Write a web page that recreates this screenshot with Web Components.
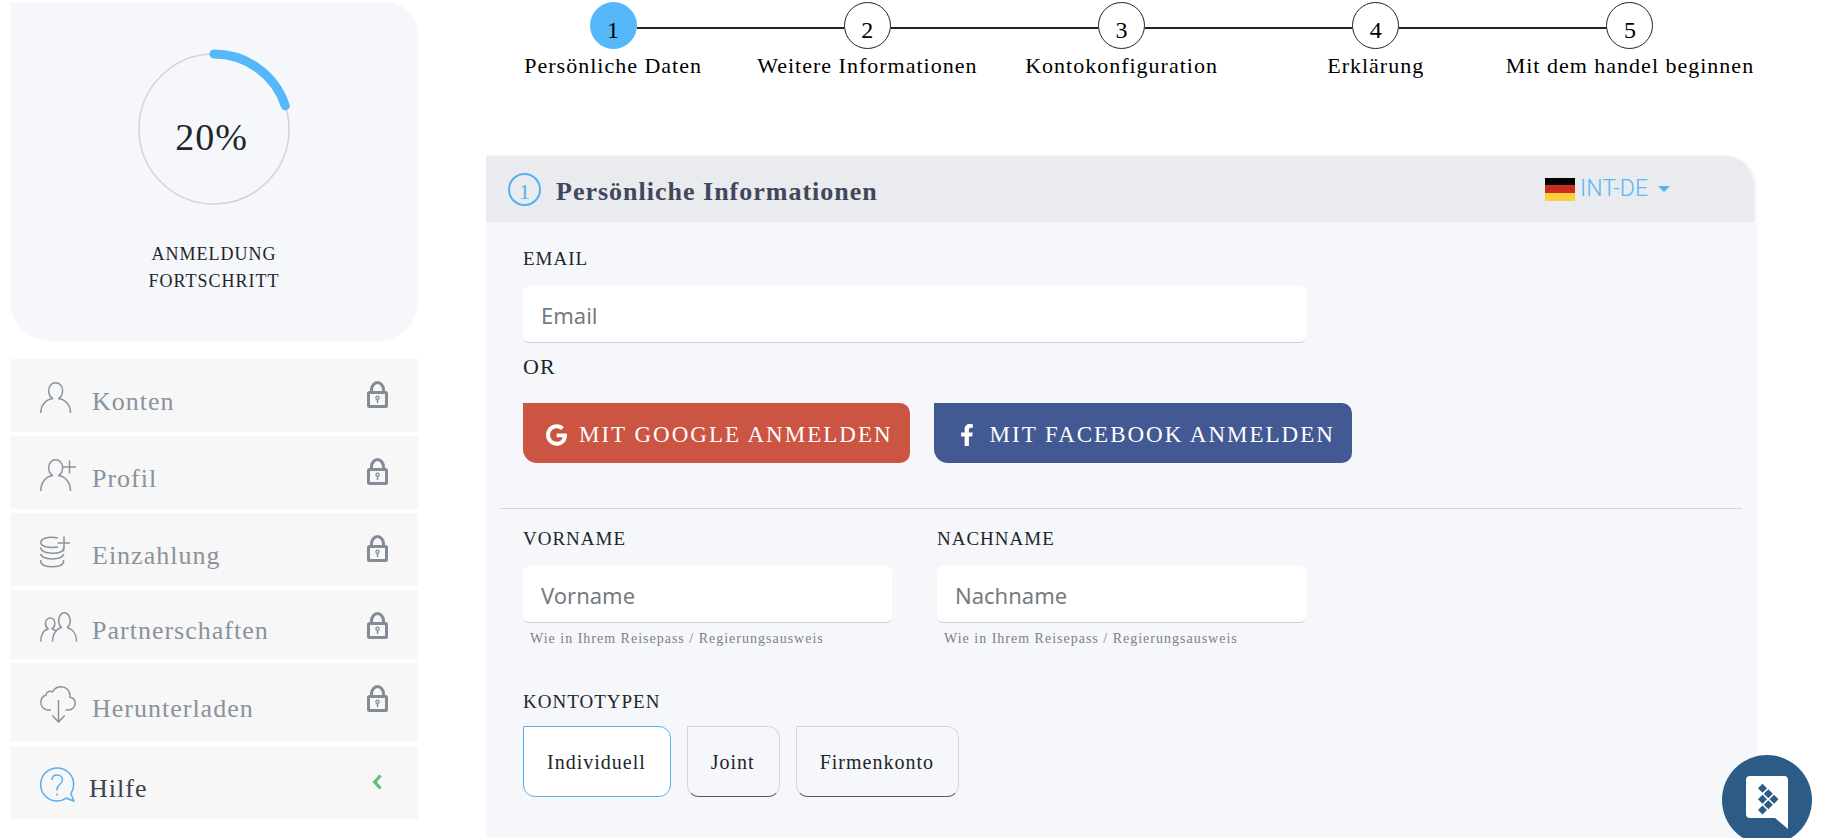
<!DOCTYPE html>
<html lang="de">
<head>
<meta charset="utf-8">
<meta name="viewport" content="width=device-width, initial-scale=1">
<title>Persönliche Informationen</title>
<style>
  body {
    margin: 0;
    background: #fff;
    color: #212529;
    font-family: "Liberation Serif", "Times New Roman", serif;
    letter-spacing: 1px;
    --accent: #54b8fa;
    --panel: #f5f7fb;
    --muted: #8a929c;
    --ink: #212529;
  }
</style>
</head>
<body>
<signup-page></signup-page>

<script>
  const define = (name, html, setup) => {
    const tpl = document.createElement('template');
    tpl.innerHTML = '<style>*,*::before,*::after{box-sizing:border-box}:host{display:block}</style>' + html;
    customElements.define(name, class extends HTMLElement {
      connectedCallback() {
        if (this.shadowRoot) return;
        this.attachShadow({ mode: 'open' }).append(tpl.content.cloneNode(true));
        if (setup) setup(this, this.shadowRoot);
      }
    });
  };

  const svg = (w, h, body) =>
    `<svg width="${w}" height="${h}" viewBox="0 0 ${w} ${h}" fill="none" aria-hidden="true">${body}</svg>`;

  const icons = {
    user: svg(32, 32, '<g stroke="#8a929c" stroke-width="1.5"><path d="M12.6 16.6C9.8 14.8 8.7 12 8.7 8.600C8.700 4 11.700.8 15.600.8C19.500.8 22.600 4 22.600 8.600C22.600 12 21.500 14.800 18.700 16.600"/><path d="M.8 31C.8 23 6 17.300 13.200 16.600M18 16.600C25.200 17.300 30.500 23 30.500 31"/></g>'),
    userPlus: svg(36, 32, '<g stroke="#8a929c" stroke-width="1.5"><path d="M12.600 16.600C9.800 14.800 8.700 12 8.700 8.600C8.700 4 11.700.8 15.600.8C19.500.8 22.600 4 22.600 8.600C22.600 12 21.500 14.800 18.700 16.600"/><path d="M.8 32C.8 23 6 17.300 13.200 16.600M18 16.600C25.200 17.300 30.500 23 30.500 32M29.500 1.500v13M23 8h13"/></g>'),
    coins: svg(32, 32, '<g stroke="#8a929c" stroke-width="1.5"><path d="M18 1.900C8 .2.8 2.200.8 6.500C.8 10.300 8 12.300 18 11.100M24 .5v13M17.500 7H30M.8 12.300C2.500 18.800 22 18.800 23.500 13M.8 18C2.500 24.500 22 24.500 23.500 18.200M.8 24V26C2.500 32.400 22 32.400 23.500 26V24M23.500 11.500V15.500M.8 11.500V13M.8 18V19.500M23.500 18V19.500"/></g>'),
    partners: svg(38, 30, '<g stroke="#8a929c" stroke-width="1.500"><path d="M8.500 16.800C6.500 15.800 5.500 13.700 5.500 11.400C5.500 8.300 7.500 6 10.200 6C12.900 6 14.800 8.300 14.800 11.400C14.800 13.700 14 15.800 12 16.800L16.500 19"/><path d="M.8 29.500C.8 23 3.500 18 8.500 16.800M21.800 15.500C19.600 13.900 18.700 11.200 18.700 8.400C18.700 4 21.200.8 24.400.8C27.600.8 30.200 4 30.200 8.400C30.200 11.200 29.300 13.900 27 15.500"/><path d="M12.500 29.500C12.500 22.500 16 16.500 21.800 15.500M27 15.500C33 17 36.500 22.500 36.500 29.500"/></g>'),
    download: svg(36, 37, '<g stroke="#8a929c" stroke-width="1.500"><path d="M11 24H8C3.700 23.500.8 20.300.8 16.300C.8 12.500 3 10 6 9.200C6.300 6 9 4.500 12.500 5.800C14.500 2.500 17.500.8 21 .8C26.200.8 29.800 4.600 30 9.500C29.900 10.500 29.900 10.800 30 11.300C33.300 11.800 35.200 14.300 35.200 17.300C35.200 21 32.200 24 28.500 24H25.500M18.500 14V36M12.300 29.500L18.500 36L24.700 29.500"/></g>'),
    help: svg(35, 35, '<g stroke="#54b0ee" stroke-width="1.500"><path d="M31 26.500C32.700 23.900 33.700 20.800 33.700 17.500A16.500 16.500 0 1 0 17.200 34C20.500 34 23.600 33 26.200 31.200L33.700 34Z"/><path d="M12 13C12 9.800 14 8 17 8C20.300 8 22.500 10 22.500 12.800C22.500 17.500 17 17 17 22.500V23.500M17 26.500v2"/></g>'),
    lock: svg(21, 27, '<path d="M4.500 12V9A6 7.500 0 0 1 16.500 9V12" stroke="#838b97" stroke-width="3"/><rect x="1.500" y="11.500" width="18" height="14" rx="1" fill="#f7f7f7" stroke="#838b97" stroke-width="3"/><circle cx="10.500" cy="16.800" r="1.600" stroke="#838b97" stroke-width="1.300"/><path d="M10.500 18.500v3.500" stroke="#838b97" stroke-width="1.500"/>'),
    chevron: svg(21, 27, '<path d="M13.500 7.500L7.700 14L13.500 20.500" stroke="#5fc16d" stroke-width="3.200"/>'),
    google: '<svg width="21" height="22" viewBox="0 0 488 512" fill="#fff" aria-hidden="true"><path d="M488 261.800C488 403.300 391.100 504 248 504 110.800 504 0 393.200 0 256S110.800 8 248 8c66.800 0 123 24.500 166.300 64.900l-67.500 64.900C258.500 52.600 94.300 116.600 94.300 256c0 86.500 69.100 156.600 153.700 156.600 98.200 0 135-70.400 140.800-106.900H248v-85.300h236.100c2.300 12.700 3.900 24.900 3.900 41.400z"/></svg>',
    facebook: '<svg width="14" height="22" viewBox="0 0 320 512" fill="#fff" aria-hidden="true"><path d="M279.140 288l14.220-92.660h-88.910v-60.130c0-25.350 12.420-50.060 52.240-50.060h40.420V6.260S260.430 0 225.360 0c-73.220 0-121.080 44.380-121.080 124.720v70.620H22.890V288h81.390v224h100.170V288z"/></svg>'
  };

  define('progress-card', `
    <style>
      :host { background: var(--panel); border-radius: 0 32px 40px 40px; padding: 47px 0 46px; text-align: center; }
      .ring { display: grid; place-items: center; }
      .ring > * { grid-area: 1 / 1; }
      .value { font-size: 38px; line-height: 44px; padding: 16px 5px 0 0; }
      p { margin: 32px 0 0; font-size: 18px; line-height: 27px; }
    </style>
    <div class="ring">
      <svg width="160" height="160" viewBox="0 0 160 160" fill="none" aria-hidden="true">
        <circle cx="80" cy="80" r="75" stroke="#d3d4d8" stroke-width="1.500"/>
        <path d="M80 5A75 75 0 0 1 151.300 56.800" stroke="#54b8fa" stroke-width="9" stroke-linecap="round"/>
      </svg>
      <span class="value"><slot name="value"></slot></span>
    </div>
    <p><slot></slot></p>`);

  define('side-item', `
    <style>
      a { display: flex; align-items: center; height: var(--row, 73px); padding: 4px 30px 0; background: #f7f7f7; color: var(--muted); text-decoration: none; font-size: 26px; line-height: 30px; }
      .icon { width: 52px; display: flex; }
      .text { flex: 1; padding-top: 8px; }
      .state { align-self: flex-start; margin-top: 18px; display: flex; }
      :host([open]) a { color: #3d4152; }
      :host([open]) .icon { width: 49px; }
    </style>
    <a href="#"><span class="icon"></span><span class="text"><slot></slot></span><span class="state"></span></a>`,
    (el, root) => {
      root.querySelector('.icon').innerHTML = icons[el.getAttribute('icon')];
      root.querySelector('.state').innerHTML = el.hasAttribute('open') ? icons.chevron : icons.lock;
    });

  define('side-nav', `
    <style>
      nav { display: grid; gap: 4px; }
      .low { --row: 69px; }
      .tall { --row: 79px; }
    </style>
    <nav>
      <side-item icon="user">Konten</side-item>
      <side-item icon="userPlus">Profil</side-item>
      <side-item icon="coins">Einzahlung</side-item>
      <side-item icon="partners" class="low">Partnerschaften</side-item>
      <side-item icon="download" class="tall">Herunterladen</side-item>
      <side-item icon="help" open>Hilfe</side-item>
    </nav>`);

  define('step-item', `
    <style>
      :host { flex: 1 1 0; color: #000; }
      .mark { display: flex; align-items: center; }
      .mark::before, .mark::after { content: ""; flex: 1; height: 2px; margin-top: 5px; background: #222; }
      :host([first]) .mark::before, :host([last]) .mark::after { background: none; }
      .num { width: 47px; height: 47px; border: 1px solid #222; border-radius: 50%; display: grid; place-items: center; padding: 8px 0 0 1px; font-size: 24px; line-height: 28px; }
      :host([active]) .num { background: var(--accent); border-color: var(--accent); }
      .label { margin-top: 2px; font-size: 22px; line-height: 30px; text-align: center; white-space: nowrap; }
    </style>
    <div class="mark"><span class="num"></span></div>
    <div class="label"><slot></slot></div>`,
    (el, root) => { root.querySelector('.num').textContent = el.getAttribute('n'); });

  define('step-bar', `
    <style>:host { display: flex; }</style>
    <step-item n="1" first active>Persönliche Daten</step-item>
    <step-item n="2">Weitere Informationen</step-item>
    <step-item n="3">Kontokonfiguration</step-item>
    <step-item n="4">Erklärung</step-item>
    <step-item n="5" last>Mit dem handel beginnen</step-item>`);

  define('language-picker', `
    <style>
      :host { display: flex; align-items: center; }
      select { appearance: none; border: 0; background: none; margin: 0; padding: 0 9px 0 5px; color: var(--accent); font: 300 23px/26px Roboto, sans-serif; cursor: pointer; }
    </style>
    <svg width="30" height="23" viewBox="0 0 30 23" aria-hidden="true"><path fill="#000" d="M0 0h30v8H0z"/><path fill="#cd2c1c" d="M0 7h30v9H0z"/><path fill="#fad03f" d="M0 15h30v8H0z"/></svg>
    <select aria-label="Sprache"><option>INT-DE</option></select>
    <svg width="12" height="6" viewBox="0 0 12 6" aria-hidden="true"><path fill="#54b0ee" d="M0 0h12L6 6z"/></svg>`);

  define('panel-header', `
    <style>
      :host { display: flex; align-items: center; height: 66px; margin-right: 3px; padding: 0 84px 0 22px; background: #e9ebef; border-radius: 0 30px 0 0; }
      .badge { width: 33px; height: 33px; border: 2px solid #54b0ee; border-radius: 50%; display: grid; place-items: center; padding-top: 5px; color: #54b0ee; font-size: 22px; line-height: 24px; letter-spacing: 0; }
      h2 { flex: 1; margin: 0 0 0 15px; padding-top: 5px; font-size: 26px; line-height: 30px; color: #41465a; }
    </style>
    <span class="badge">1</span>
    <h2>Persönliche Informationen</h2>
    <language-picker></language-picker>`);

  define('form-field', `
    <style>
      label { display: block; font-size: 19px; line-height: 24px; margin-bottom: 15px; }
      input { display: block; width: 100%; height: 57px; padding: 2px 18px 0; border: 0; border-bottom: 1px solid #ced0d6; border-radius: 6px; background: #fff; font: 22px/30px "Noto Sans", sans-serif; color: var(--ink); outline: 0; }
      input::placeholder { color: #757b80; opacity: 1; }
      small { display: block; margin: 6px 0 0 7px; font-size: 14px; line-height: 20px; color: #7d8185; }
    </style>
    <label for="f"><slot></slot></label>
    <input id="f">`,
    (el, root) => {
      const input = root.querySelector('input');
      input.type = el.getAttribute('type') || 'text';
      input.placeholder = el.getAttribute('placeholder');
      if (el.hasAttribute('hint')) {
        const hint = document.createElement('small');
        hint.id = 'hint';
        hint.textContent = el.getAttribute('hint');
        input.setAttribute('aria-describedby', 'hint');
        root.append(hint);
      }
    });

  define('social-button', `
    <style>
      button { display: flex; align-items: center; gap: 12px; height: 60px; padding: 4px 17px 0 22px; border: 0; border-radius: 0 10px 10px 14px; background: #cb5442; color: #fff; font: 23px/28px "Liberation Serif", "Times New Roman", serif; letter-spacing: 2px; text-transform: uppercase; white-space: nowrap; cursor: pointer; }
      :host([brand="facebook"]) button { background: #425993; }
      .icon { width: 22px; display: flex; justify-content: center; }
    </style>
    <button type="button"><span class="icon"></span><slot></slot></button>`,
    (el, root) => { root.querySelector('.icon').innerHTML = icons[el.getAttribute('brand')]; });

  define('account-types', `
    <style>
      fieldset { margin: 0; padding: 0; border: 0; min-width: 0; }
      legend { padding: 0; font-size: 19px; line-height: 24px; margin-bottom: 12px; }
      .row { display: flex; gap: 16px; }
      label { position: relative; display: flex; align-items: center; height: 71px; padding: 0 24px 0 23px; border: 1px solid #d4d6db; border-bottom-color: #55595e; border-radius: 0 12px 12px 12px; font-size: 20px; line-height: 24px; cursor: pointer; }
      label:has(:checked) { background: #fff; border-color: #59b1e6; }
      input { position: absolute; inset: 0; margin: 0; opacity: 0; width: 100%; height: 100%; cursor: pointer; }
    </style>
    <fieldset>
      <legend>KONTOTYPEN</legend>
      <div class="row">
        <label><input type="radio" name="account" checked>Individuell</label>
        <label><input type="radio" name="account">Joint</label>
        <label><input type="radio" name="account">Firmenkonto</label>
      </div>
    </fieldset>`);

  define('personal-form', `
    <style>
      .group { padding: 0 22px; display: grid; grid-template-columns: repeat(3, minmax(0, 1fr)); column-gap: 45px; }
      form { padding: 25px 15px 40px; }
      .wide { grid-column: span 2; }
      .full { grid-column: 1 / -1; }
      .or { font-size: 22px; line-height: 30px; margin: 9px 0 21px; }
      .social { display: flex; flex-wrap: wrap; gap: 24px; }
      hr { margin: 45px 0 18px; border: 0; border-top: 1px solid #d3d6dc; }
      account-types { margin-top: 41px; }
    </style>
    <form>
      <div class="group">
        <form-field class="wide" type="email" placeholder="Email">EMAIL</form-field>
        <div class="or full">OR</div>
        <div class="social full">
          <social-button brand="google">Mit Google anmelden</social-button>
          <social-button brand="facebook">Mit Facebook anmelden</social-button>
        </div>
      </div>
      <hr>
      <div class="group">
        <form-field placeholder="Vorname" hint="Wie in Ihrem Reisepass / Regierungsausweis">VORNAME</form-field>
        <form-field placeholder="Nachname" hint="Wie in Ihrem Reisepass / Regierungsausweis">NACHNAME</form-field>
        <account-types class="full"></account-types>
      </div>
    </form>`);

  define('chat-launcher', `
    <style>
      :host { position: fixed; right: 13px; bottom: -7px; }
      button { display: block; width: 90px; height: 90px; padding: 0; border: 0; border-radius: 50%; background: #2c5c85; cursor: pointer; }
      svg { display: block; }
    </style>
    <button type="button" aria-label="Chat">
      <svg width="90" height="90" viewBox="0 0 90 90" aria-hidden="true">
        <path fill="#fff" d="M28 21H62Q66 21 66 25V74L53 63H28Q24 63 24 59V25Q24 21 28 21Z"/>
        <g fill="#2c5c85">
          <path d="M40.500 28.700L45 33.200L40.500 37.700L36 33.200Z"/>
          <path d="M46.300 34.200L50.800 38.700L46.300 43.200L41.800 38.700Z"/>
          <path d="M40.500 39.700L45 44.200L40.500 48.700L36 44.200Z"/>
          <path d="M52 39.700L56.500 44.200L52 48.700L47.500 44.200Z"/>
          <path d="M46.300 45.200L50.800 49.700L46.300 54.200L41.800 49.700Z"/>
          <path d="M40.500 50.500L45 55L40.500 59.500L36 55Z"/>
        </g>
      </svg>
    </button>`);

  define('signup-page', `
    <style>
      :host { display: grid; grid-template-columns: 408px minmax(0, 1fr); column-gap: 68px; min-height: 100vh; padding: 2px 68px 0 10px; }
      aside { display: grid; gap: 18px; align-content: start; }
      main { display: flex; flex-direction: column; gap: 74px; }
      .panel { flex: 1; background: var(--panel); border-radius: 0 32px 0 0; padding-top: 1px; }
    </style>
    <aside>
      <progress-card><span slot="value">20%</span>ANMELDUNG<br>FORTSCHRITT</progress-card>
      <side-nav></side-nav>
    </aside>
    <main>
      <step-bar></step-bar>
      <section class="panel">
        <panel-header></panel-header>
        <personal-form></personal-form>
      </section>
    </main>
    <chat-launcher></chat-launcher>`);
</script>
</body>
</html>
